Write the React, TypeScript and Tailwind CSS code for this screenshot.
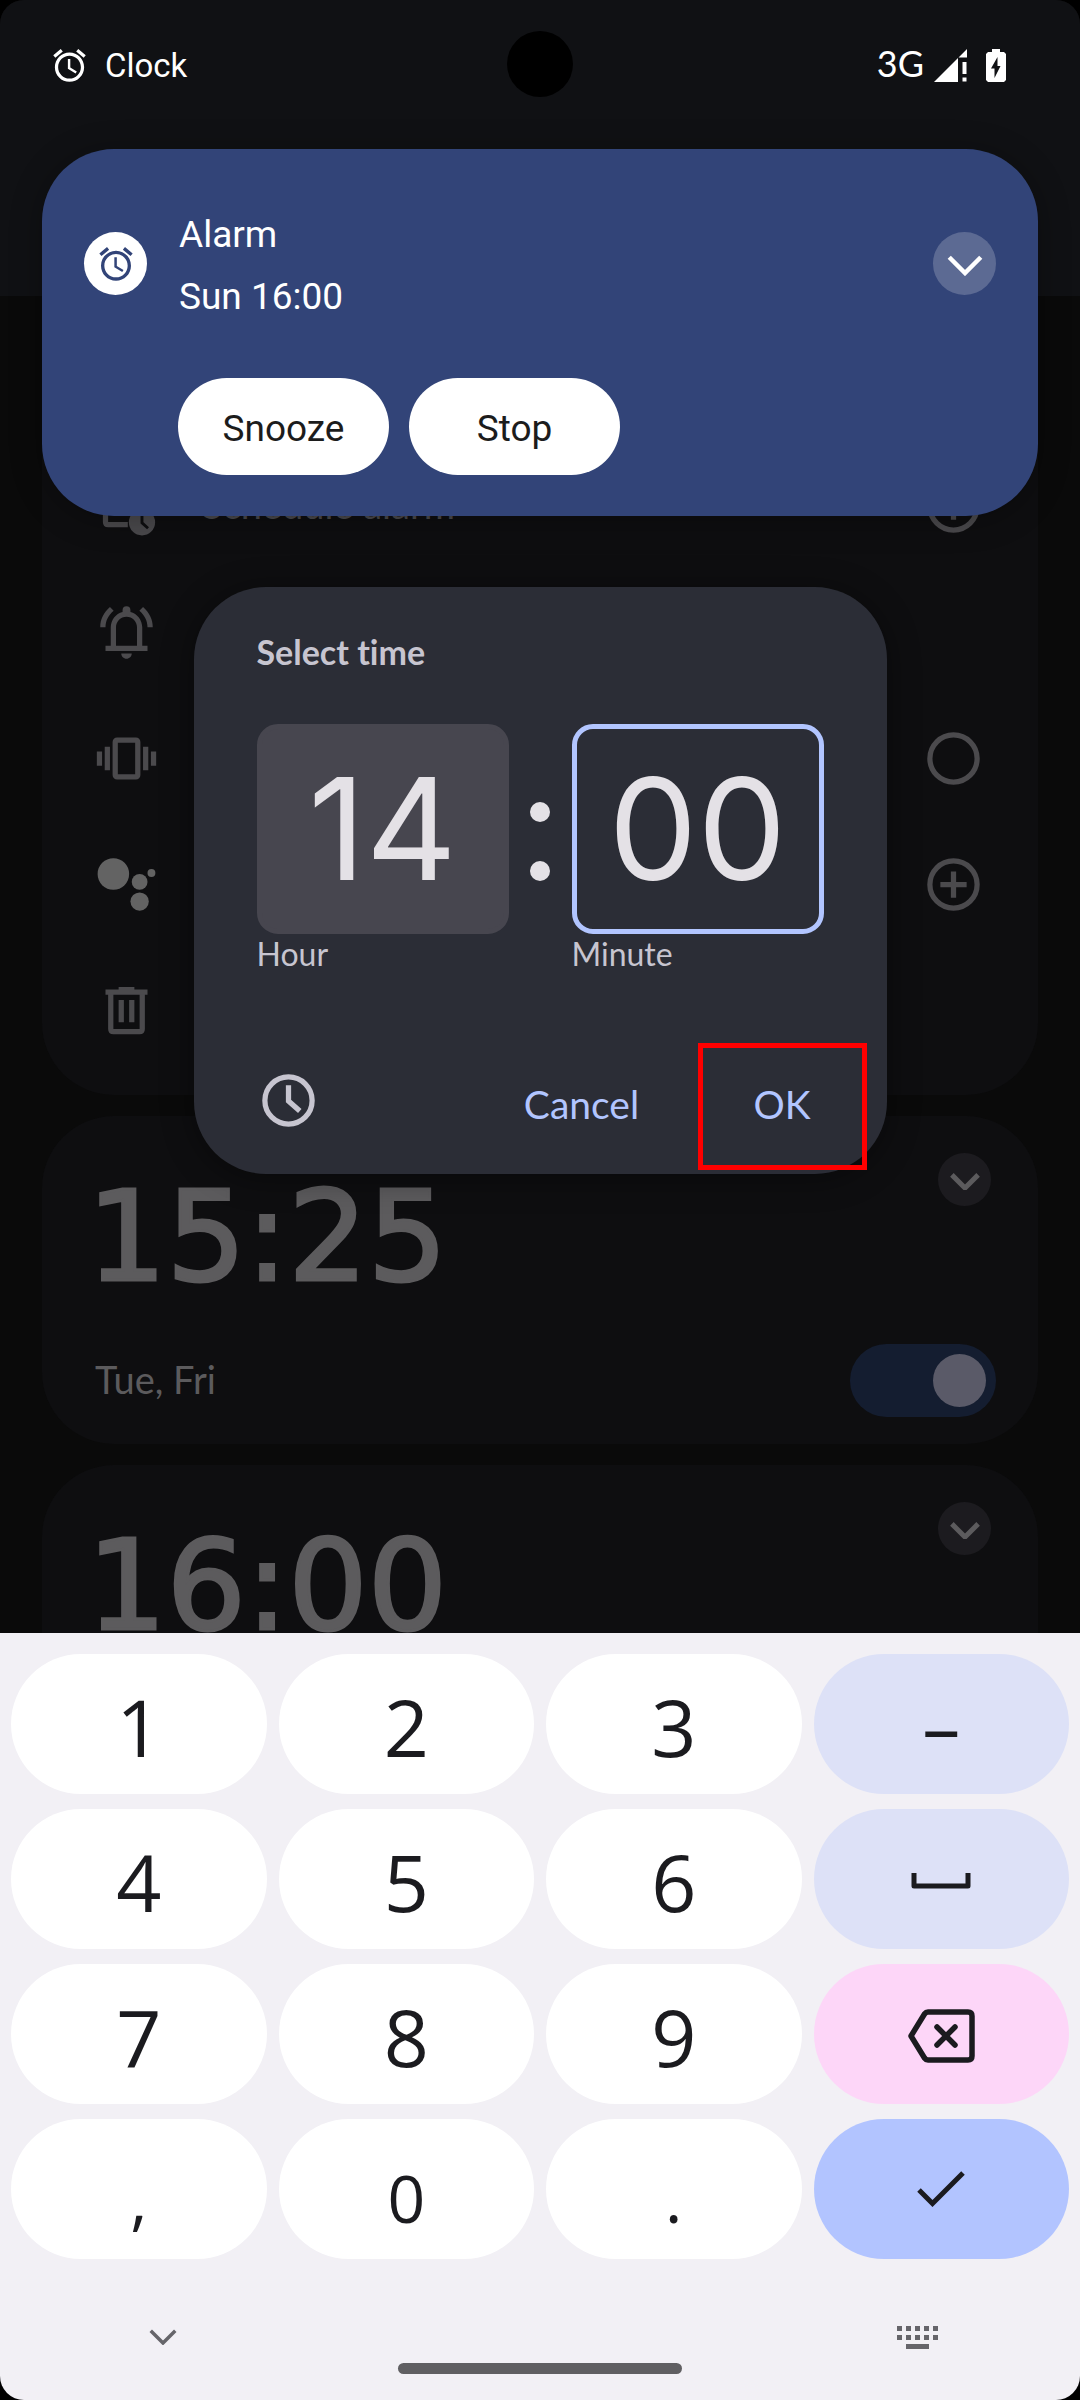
import React from "react";

type IconProps = { className?: string };

function AlarmIcon({ className }: IconProps) {
  return (
    <svg viewBox="0 0 24 24" className={className} fill="currentColor" aria-hidden="true">
      <path d="M22 5.72l-4.6-3.86-1.29 1.53 4.6 3.86L22 5.72zM7.88 3.39L6.6 1.86 2 5.71l1.29 1.53 4.59-3.85zM12.5 8H11v6l4.75 2.85.75-1.23-4-2.37V8zM12 4c-4.97 0-9 4.03-9 9s4.02 9 9 9c4.97 0 9-4.03 9-9s-4.03-9-9-9zm0 16c-3.87 0-7-3.13-7-7s3.13-7 7-7 7 3.13 7 7-3.13 7-7 7z" />
    </svg>
  );
}

function Chevron({ className, weight = 2 }: IconProps & { weight?: number }) {
  return (
    <svg viewBox="0 0 24 14" className={className} fill="none" stroke="currentColor" strokeWidth={weight} aria-hidden="true">
      <path d="M1.500 1.500L12 12L22.500 1.500" />
    </svg>
  );
}

function SignalIcon({ className }: IconProps) {
  return (
    <svg viewBox="0 0 33 33" className={className} fill="currentColor" aria-hidden="true">
      <path d="M0 33L24 9V33zM24.500 8.500L33 0V8.500z" />
      <path d="M28.500 13h4v12h-4zM28.500 28.500h4v4h-4z" />
    </svg>
  );
}

function BatteryIcon({ className }: IconProps) {
  return (
    <svg viewBox="0 0 20 33" className={className} aria-hidden="true">
      <path fill="#fff" d="M6 0h8v3h4l2 2v26l-2 2H2l-2-2V5l2-2h4z" />
      <path fill="#101114" d="M11.500 8L5 19.500h3.500V29L14.500 17H11.500z" />
    </svg>
  );
}

function ScheduleIcon({ className }: IconProps) {
  return (
    <svg viewBox="0 0 24 24" className={className} aria-hidden="true">
      <path fill="none" stroke="#4b4a4d" strokeWidth="2" d="M12.500 18.900H5Q4 18.900 4 17.900V5H18V11" />
      <circle cx="17.900" cy="18" r="5" fill="#4b4a4d" />
      <path fill="none" stroke="#0e0e10" strokeWidth="1.100" d="M17.900 15V18.200L20.200 20.300" />
    </svg>
  );
}

function BellIcon({ className }: IconProps) {
  return (
    <svg viewBox="0 0 24 24" className={className} fill="#4b4a4d" aria-hidden="true">
      <path d="M4 19v-2h2v-7c0-2.770 1.880-5.200 4.500-5.850V3.500a1.500 1.500 0 0 1 3 0v.650C16.120 4.800 18 7.230 18 10v7h2v2zM16 17v-7c0-2.210-1.790-4-4-4s-4 1.790-4 4v7zM10 20h4c0 1.100-.9 2-2 2s-2-.9-2-2z" />
      <path d="M2 10C2 7 3.200 4.600 5.700 2.300L7.100 3.700C5 5.600 4 7.500 4 10zM22 10C22 7 20.800 4.600 18.300 2.300L16.900 3.700C19 5.600 20 7.500 20 10z" />
    </svg>
  );
}

function VibrateIcon({ className }: IconProps) {
  return (
    <svg viewBox="0 0 24 24" className={className} fill="#4b4a4d" aria-hidden="true">
      <path d="M.7 9.300h2v5.500h-2zM3.700 7.500h2v9h-2zM18.300 7.500h2v9h-2zM21.300 9.300h2v5.500h-2z" />
      <rect x="7.700" y="5" width="8.600" height="14" rx=".7" fill="none" stroke="#4b4a4d" strokeWidth="2" />
    </svg>
  );
}

function AssistantIcon({ className }: IconProps) {
  return (
    <svg viewBox="0 0 24 24" className={className} fill="#636363" aria-hidden="true">
      <circle cx="7" cy="8" r="6" />
      <circle cx="17" cy="11" r="3" />
      <circle cx="17" cy="18.500" r="3.500" />
      <circle cx="21.500" cy="7.600" r="1.500" />
    </svg>
  );
}

function TrashIcon({ className }: IconProps) {
  return (
    <svg viewBox="0 0 24 24" className={className} aria-hidden="true">
      <path fill="none" stroke="#4b4a4d" strokeWidth="2" d="M6 5V19Q6 20 7 20H17Q18 20 18 19V5" />
      <path fill="#4b4a4d" d="M4 4h5V3h6v1h5v2H4zM9 8h2v8.500H9zM13 8h2v8.500h-2z" />
    </svg>
  );
}

function RingIcon({ className, plus = false }: IconProps & { plus?: boolean }) {
  return (
    <svg viewBox="0 0 24 24" className={className} fill="none" stroke="#4b4a4d" strokeWidth="2" aria-hidden="true">
      <circle cx="12" cy="12" r="9" />
      {plus && <path d="M12 7V17M7 12H17" />}
    </svg>
  );
}

function ClockIcon({ className }: IconProps) {
  return (
    <svg viewBox="0 0 24 24" className={className} fill="none" stroke="currentColor" strokeWidth="2" aria-hidden="true">
      <circle cx="12" cy="12" r="9" />
      <path d="M12 6.200V12.200L16.300 16" />
    </svg>
  );
}

function SpaceIcon() {
  return (
    <svg viewBox="0 0 60 16" className="w-[60px]" fill="none" stroke="currentColor" strokeWidth="5" strokeLinejoin="round" aria-hidden="true">
      <path d="M3 0V13H57V0" />
    </svg>
  );
}

function BackspaceIcon() {
  return (
    <svg viewBox="0 0 67 54" className="w-[67px]" fill="none" stroke="currentColor" strokeWidth="5.500" strokeLinejoin="round" strokeLinecap="round" aria-hidden="true">
      <path d="M20 3H60Q64 3 64 7V47Q64 51 60 51H20Q18 51 16.500 49L3 27L16.500 5Q18 3 20 3z" />
      <path d="M29 18L47 36M47 18L29 36" />
    </svg>
  );
}

function CheckIcon() {
  return (
    <svg viewBox="0 0 48 36" className="w-12" fill="none" stroke="currentColor" strokeWidth="5" aria-hidden="true">
      <path d="M2 19L15.500 32.500L46 2" />
    </svg>
  );
}

function KeyboardIcon() {
  const columns = [0, 9, 18, 27, 36];
  return (
    <svg viewBox="0 0 41 23" className="w-[41px]" fill="currentColor" aria-hidden="true">
      {columns.map((x) => (
        <React.Fragment key={x}>
          <rect x={x} y="0" width="5" height="5" />
          <rect x={x} y="9" width="5" height="5" />
        </React.Fragment>
      ))}
      <rect x="9" y="18" width="23" height="5" />
    </svg>
  );
}

function StatusBar() {
  return (
    <header className="relative flex h-[130px] items-center justify-between pl-[50px] pr-[74px] text-white">
      <div className="flex items-center gap-4">
        <AlarmIcon className="size-[39px]" />
        <span className="pt-0.5 font-['Roboto'] text-[33px] leading-10">Clock</span>
      </div>
      <span className="absolute left-1/2 top-[31px] size-[66px] -translate-x-1/2 rounded-full bg-black" />
      <div className="flex items-center">
        <span className="mr-[10px] pb-1 text-[36px] leading-10">3G</span>
        <SignalIcon className="mr-[19px] size-[33px]" />
        <BatteryIcon className="h-[33px] w-5" />
      </div>
    </header>
  );
}

function Notification() {
  return (
    <section
      aria-label="Alarm notification"
      className="mx-[42px] flex items-start rounded-[72px] bg-[#324478] px-[42px] pb-[41px] pt-[55px] font-['Roboto'] text-[37px] text-white shadow-[0_4px_32px_rgba(0,0,0,0.3)]"
    >
      <span className="mt-[28px] flex size-[63px] items-center justify-center rounded-full bg-white text-[#324478]">
        <AlarmIcon className="size-10" />
      </span>
      <div className="ml-[31px] flex-1">
        <p className="pl-px leading-[62px]">Alarm</p>
        <p className="pl-px leading-[62px]">Sun 16:00</p>
        <div className="mt-[50px] flex gap-5 text-[#1c1c1c]">
          <button className="h-[97px] w-[211px] rounded-full bg-white pt-1">Snooze</button>
          <button className="h-[97px] w-[211px] rounded-full bg-white pt-1">Stop</button>
        </div>
      </div>
      <button aria-label="Expand" className="mt-[28px] flex size-[63px] items-center justify-center rounded-full bg-[#5c6a93]">
        <Chevron className="mt-1 w-9" weight={3} />
      </button>
    </section>
  );
}

function SettingRow({ icon, label, action }: { icon: React.ReactNode; label?: string; action?: React.ReactNode }) {
  return (
    <div className="flex h-[126px] items-center">
      {icon}
      <span className="ml-[44px] flex-1 pb-1 text-[38px] leading-[48px] text-[#4b4a4d]">{label}</span>
      {action}
    </div>
  );
}

function AlarmHead({ time }: { time: string }) {
  return (
    <div className="flex justify-between">
      <span className="-ml-2 mt-[75px] font-['DejaVu_Sans'] text-[125px] leading-[92px] text-[#5c5b5d] [-webkit-text-stroke:3px_#5c5b5d]">
        {time}
      </span>
      <button aria-label={`Expand ${time}`} className="mr-[5px] mt-[37px] flex size-[53px] items-center justify-center rounded-full bg-[#1c1b1f] text-[#5c5b5d]">
        <Chevron className="mt-1 w-[30px]" weight={4} />
      </button>
    </div>
  );
}

function TimeField({ id, label, value, active = false }: { id: string; label: string; value: string; active?: boolean }) {
  return (
    <div className="min-w-0 flex-1">
      <input
        id={id}
        defaultValue={value}
        inputMode="numeric"
        className={
          active
            ? "block h-[210px] w-full rounded-[21px] border-[5px] border-[#b2c5ff] bg-transparent text-center font-['Inter'] text-[141px] text-[#e4e1e6] outline-none"
            : "block h-[210px] w-full rounded-[21px] border-[5px] border-[#47464f] bg-[#47464f] text-center font-['Inter'] text-[141px] text-[#e4e1e6] outline-none"
        }
      />
      <label htmlFor={id} className="block text-[32px] leading-10 text-[#c7c5d0]">
        {label}
      </label>
    </div>
  );
}

function TimeDialog() {
  return (
    <div role="dialog" aria-label="Select time" className="w-[693px] rounded-[72px] bg-[#2b2d36] pb-1 pt-[45px] shadow-[0_4px_32px_rgba(0,0,0,0.4)]">
      <h2 className="mb-[52px] px-[63px] text-[34px] font-bold leading-10 text-[#c7c5d0] [font-variant-ligatures:none]">Select time</h2>
      <div className="flex px-[63px]">
        <TimeField id="hour" label="Hour" value="14" />
        <div className="flex h-[210px] w-[63px] flex-col items-center justify-center gap-[39px] pt-[25px]">
          <span className="size-5 rounded-full bg-[#e4e1e6]" />
          <span className="size-5 rounded-full bg-[#e4e1e6]" />
        </div>
        <TimeField id="minute" label="Minute" value="00" active />
      </div>
      <div className="mt-[69px] flex items-center pl-[63px] pr-5 text-[39px] text-[#b2c5ff]">
        <button aria-label="Switch to clock input" className="mb-3 mr-auto text-[#c7c5d0]">
          <ClockIcon className="size-[63px]" />
        </button>
        <button className="mr-4 h-[127px] w-[200px] pb-1">Cancel</button>
        <button className="h-[127px] w-[169px] border-[5px] border-[#ff0000] pb-1">OK</button>
      </div>
    </div>
  );
}

const digitKey = "flex h-[140px] items-center justify-center rounded-full bg-white pt-1 text-[79px] leading-none";
const smallKey = "flex h-[140px] items-center justify-center rounded-full bg-white pt-4 text-[66px] leading-none";

function Keyboard() {
  return (
    <section aria-label="Keyboard" className="rounded-b-[24px] bg-[#f2f0f5] px-[11px] pb-[26px] pt-[21px] font-['Open_Sans'] text-[#1b1b1f]">
      <div className="grid grid-cols-4 gap-x-3 gap-y-[15px]">
        <button className={digitKey}>1</button>
        <button className={digitKey}>2</button>
        <button className={digitKey}>3</button>
        <button className="flex h-[140px] items-center justify-center rounded-full bg-[#dde1f7] pt-1 text-[76px] leading-none">–</button>
        <button className={digitKey}>4</button>
        <button className={digitKey}>5</button>
        <button className={digitKey}>6</button>
        <button aria-label="Space" className="flex h-[140px] items-center justify-center rounded-full bg-[#dde1f7] pt-1">
          <SpaceIcon />
        </button>
        <button className={digitKey}>7</button>
        <button className={digitKey}>8</button>
        <button className={digitKey}>9</button>
        <button aria-label="Backspace" className="flex h-[140px] items-center justify-center rounded-full bg-[#fdd6f8] pt-1">
          <BackspaceIcon />
        </button>
        <button className={smallKey}>,</button>
        <button className={smallKey}>0</button>
        <button className={smallKey}>.</button>
        <button aria-label="Done" className="flex h-[140px] items-center justify-center rounded-full bg-[#b2c4ff]">
          <CheckIcon />
        </button>
      </div>
      <div className="mt-[66px] flex h-6 items-center justify-between pl-[138px] pr-[131px] text-[#66656a]">
        <button aria-label="Hide keyboard">
          <Chevron className="w-7" weight={3} />
        </button>
        <button aria-label="Switch keyboard">
          <KeyboardIcon />
        </button>
      </div>
      <div className="mx-auto mt-[14px] h-[11px] w-[284px] rounded-full bg-[#605f62]" />
    </section>
  );
}

export default function App() {
  return (
    <div className="min-h-screen bg-black font-['Lato',sans-serif]">
      <div className="relative overflow-hidden rounded-t-[24px] bg-[#0a0a0a]">
        <div className="h-[296px] bg-[#101114]">
          <StatusBar />
        </div>
        <main className="flex flex-col gap-[21px] px-[42px]">
          <section className="rounded-b-[72px] bg-[#0e0e10] pb-[22px] pl-[53px] pr-[53px] pt-[147px]">
            <SettingRow icon={<ScheduleIcon className="size-[63px]" />} label="Schedule alarm" action={<RingIcon plus className="size-[63px]" />} />
            <SettingRow icon={<BellIcon className="size-[63px]" />} />
            <SettingRow icon={<VibrateIcon className="size-[63px]" />} action={<RingIcon className="size-[63px]" />} />
            <SettingRow icon={<AssistantIcon className="size-[63px]" />} action={<RingIcon plus className="size-[63px]" />} />
            <SettingRow icon={<TrashIcon className="size-[63px]" />} />
          </section>
          <section className="rounded-[72px] bg-[#0e0e10] pb-[27px] pl-[53px] pr-[42px]">
            <AlarmHead time="15:25" />
            <div className="mt-[61px] flex items-center justify-between">
              <label htmlFor="alarm-1525" className="pb-1 text-[38px] leading-[48px] text-[#5c5b5d]">
                Tue, Fri
              </label>
              <input
                id="alarm-1525"
                type="checkbox"
                role="switch"
                defaultChecked
                className="flex h-[73px] w-[146px] appearance-none items-center justify-end rounded-full bg-[#141d30] pr-[10px] before:size-[53px] before:rounded-full before:bg-[#5a5a68]"
              />
            </div>
          </section>
          <section className="rounded-t-[72px] bg-[#0e0e10] pb-px pl-[53px] pr-[42px]">
            <AlarmHead time="16:00" />
          </section>
        </main>
        <div className="absolute inset-x-0 top-[587px] flex justify-center">
          <TimeDialog />
        </div>
        <div className="absolute inset-x-0 top-[149px]">
          <Notification />
        </div>
      </div>
      <Keyboard />
    </div>
  );
}
